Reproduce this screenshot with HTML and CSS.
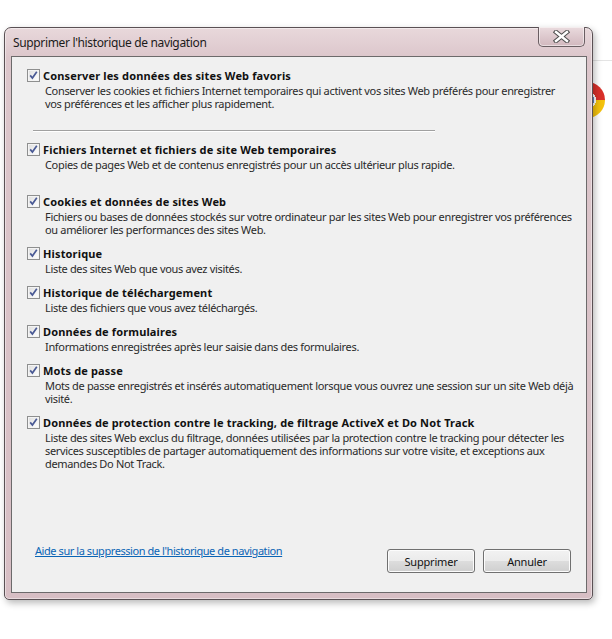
FILE: index.html
```html
<!DOCTYPE html>
<html lang="fr">
<head>
<meta charset="utf-8">
<title>Supprimer l'historique de navigation</title>
<link rel="stylesheet" href="styles.css">
</head>
<body>
<div class="desktop">
  <div class="bg-line"></div>
  <div class="chrome-logo"></div>
  <div class="dialog">
    <div class="titlebar">
      <span class="title">Supprimer l'historique de navigation</span>
      <button class="close" aria-label="Fermer">
        <svg width="17" height="13" viewBox="0 0 17 13">
          <path d="M3 2 L14 11 M14 2 L3 11" stroke="#4d4d4d" stroke-width="4.4" stroke-linecap="square" fill="none"/>
          <path d="M3 2 L14 11 M14 2 L3 11" stroke="#ffffff" stroke-width="2.4" stroke-linecap="square" fill="none"/>
        </svg>
      </button>
    </div>
    <div class="panel">
      <div class="options">
        <div class="item">
          <span class="check"></span>
          <div class="label">Conserver les données des sites Web favoris</div>
          <div class="desc">Conserver les cookies et fichiers Internet temporaires qui activent vos sites Web préférés pour enregistrer<br>vos préférences et les afficher plus rapidement.</div>
        </div>
        <div class="sep"></div>
        <div class="item">
          <span class="check"></span>
          <div class="label">Fichiers Internet et fichiers de site Web temporaires</div>
          <div class="desc">Copies de pages Web et de contenus enregistrés pour un accès ultérieur plus rapide.</div>
        </div>
        <div class="item spaced">
          <span class="check"></span>
          <div class="label">Cookies et données de sites Web</div>
          <div class="desc">Fichiers ou bases de données stockés sur votre ordinateur par les sites Web pour enregistrer vos préférences<br>ou améliorer les performances des sites Web.</div>
        </div>
        <div class="item">
          <span class="check"></span>
          <div class="label">Historique</div>
          <div class="desc">Liste des sites Web que vous avez visités.</div>
        </div>
        <div class="item">
          <span class="check"></span>
          <div class="label">Historique de téléchargement</div>
          <div class="desc">Liste des fichiers que vous avez téléchargés.</div>
        </div>
        <div class="item">
          <span class="check"></span>
          <div class="label">Données de formulaires</div>
          <div class="desc">Informations enregistrées après leur saisie dans des formulaires.</div>
        </div>
        <div class="item">
          <span class="check"></span>
          <div class="label">Mots de passe</div>
          <div class="desc">Mots de passe enregistrés et insérés automatiquement lorsque vous ouvrez une session sur un site Web déjà<br>visité.</div>
        </div>
        <div class="item">
          <span class="check"></span>
          <div class="label">Données de protection contre le tracking, de filtrage ActiveX et Do Not Track</div>
          <div class="desc">Liste des sites Web exclus du filtrage, données utilisées par la protection contre le tracking pour détecter les<br>services susceptibles de partager automatiquement des informations sur votre visite, et exceptions aux<br>demandes Do Not Track.</div>
        </div>
      </div>
      <div class="footer">
        <a class="help" href="#">Aide sur la suppression de l'historique de navigation</a>
        <div class="buttons">
          <button class="btn">Supprimer</button>
          <button class="btn">Annuler</button>
        </div>
      </div>
    </div>
  </div>
</div>
</body>
</html>
```
FILE: styles.css
```css
html, body {
  margin: 0;
  padding: 0;
  background: #ffffff;
}

body {
  font-family: "Noto Sans", "Open Sans", sans-serif;
  font-size: 11px;
  color: #1e1e1e;
}

.desktop {
  position: relative;
  width: 612px;
  height: 639px;
  overflow: hidden;
  padding-top: 27px;
  padding-left: 4px;
  box-sizing: border-box;
}

.bg-line {
  position: absolute;
  left: 560px;
  top: 60px;
  width: 52px;
  height: 1px;
  background: #e4e4e4;
}

.chrome-logo {
  position: absolute;
  left: 569px;
  top: 82px;
  width: 36px;
  height: 36px;
  border-radius: 50%;
  background:
    radial-gradient(circle at 50% 50%, #5b7fc0 0 7px, #ffffff 7px 9px, transparent 9px),
    conic-gradient(from -30deg, #d9302a 0 120deg, #f4c20d 120deg 240deg, #3aa757 240deg 360deg);
}

.dialog {
  position: relative;
  width: 589px;
  height: 573px;
  box-sizing: border-box;
  border: 1px solid #5a5054;
  border-radius: 7px 7px 5px 5px;
  background: linear-gradient(to bottom, #e8d8db 0, #dcc6cb 30px, #d7bec4 100%);
  box-shadow: 2px 3px 7px rgba(0, 0, 0, 0.28), inset 0 0 0 1px rgba(255, 255, 255, 0.45);
  display: flex;
  flex-direction: column;
  padding: 0 5px 6px 6px;
}

.titlebar {
  height: 28px;
  display: flex;
  align-items: flex-start;
}

.title {
  margin-left: 2px;
  margin-top: 7px;
  font-size: 12px;
  line-height: 16px;
  letter-spacing: -0.35px;
  color: #1b1b1b;
}

.close {
  margin-left: auto;
  margin-right: 2px;
  margin-top: -1px;
  width: 47px;
  height: 20px;
  padding: 0;
  border: 1px solid #6a5e62;
  border-top: none;
  border-radius: 0 0 5px 5px;
  background: linear-gradient(to bottom, #eadbde 0, #dcc7cc 55%, #d2b8be 100%);
  box-shadow: inset 0 0 0 1px rgba(255, 255, 255, 0.5);
  display: flex;
  align-items: center;
  justify-content: center;
}

.panel {
  flex: 1;
  border: 1px solid #6c6a6b;
  background: #f0f0f0;
  display: flex;
  flex-direction: column;
  padding: 10px 15px 19px 15px;
}

.options {
  display: flex;
  flex-direction: column;
  gap: 9px;
  margin-right: -10px;
}

.item {
  display: grid;
  grid-template-columns: 13px 1fr;
  column-gap: 3px;
}

.item.spaced {
  margin-top: 13px;
}

.check {
  width: 13px;
  height: 13px;
  box-sizing: border-box;
  margin-top: 2px;
  border: 1px solid #8e8f8f;
  background:
    url("data:image/svg+xml;utf8,<svg xmlns='http://www.w3.org/2000/svg' width='11' height='11' viewBox='0 0 11 11'><path d='M2.2 5.4 L4.4 8 L8.8 1.8' stroke='%234a5a95' stroke-width='1.7' fill='none'/></svg>") center / 11px 11px no-repeat,
    linear-gradient(135deg, #dcdcdc 0, #f4f4f4 60%, #ffffff 100%);
  box-shadow: inset 0 0 0 1px #f4f4f4;
}

.label {
  font-weight: bold;
  font-size: 11px;
  line-height: 17px;
  letter-spacing: 0.15px;
  color: #111111;
}

.desc {
  grid-column: 1 / -1;
  padding-left: 18px;
  line-height: 13px;
  letter-spacing: -0.33px;
  white-space: nowrap;
  color: #2a2a2a;
}

.sep {
  margin: 11px 0 0 6px;
  width: 402px;
  height: 1px;
  background: #a0a0a0;
  border-bottom: 1px solid #ffffff;
}

.footer {
  margin-top: auto;
  display: flex;
  align-items: flex-end;
  justify-content: space-between;
}

.help {
  margin-left: 8px;
  margin-bottom: 15px;
  color: #0a64b5;
  text-decoration: underline;
  line-height: 15px;
  letter-spacing: -0.43px;
}

.buttons {
  display: flex;
  gap: 8px;
}

.btn {
  width: 88px;
  height: 24px;
  padding: 0;
  border: 1px solid #707070;
  border-radius: 3px;
  font-family: "Noto Sans", "Open Sans", sans-serif;
  font-size: 11px;
  letter-spacing: -0.2px;
  color: #111111;
  background: linear-gradient(to bottom, #f2f2f2 0, #ebebeb 50%, #dddddd 50%, #cfcfcf 100%);
  box-shadow: inset 0 0 0 1px #fcfcfc;
}
```
